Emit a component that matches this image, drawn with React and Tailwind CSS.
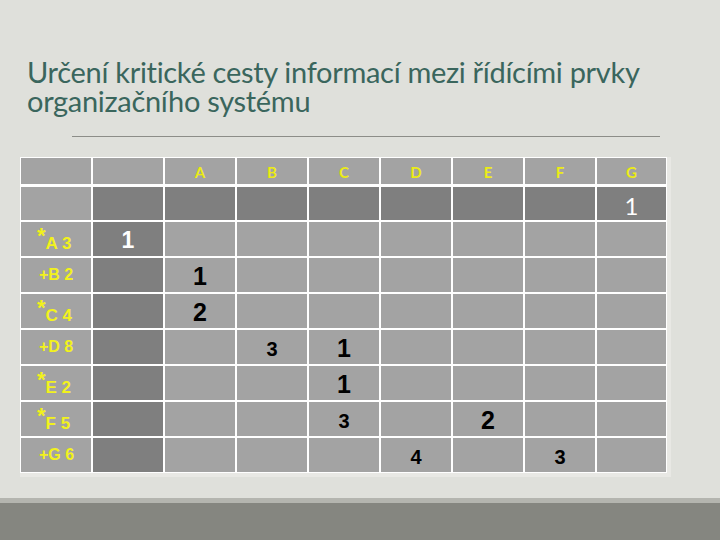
const COLS = ["", "", "A", "B", "C", "D", "E", "F", "G"];

// each row: label (with star or plus), then cells by column index
const ROWS = [
  { star: true, name: "A 3", cells: { 1: { v: "1", tone: "white" } } },
  { star: false, name: "+B 2", cells: { 2: { v: "1" } } },
  { star: true, name: "C 4", cells: { 2: { v: "2" } } },
  { star: false, name: "+D 8", cells: { 3: { v: "3", small: true }, 4: { v: "1" } } },
  { star: true, name: "E 2", cells: { 4: { v: "1" } } },
  { star: true, name: "F 5", cells: { 4: { v: "3", small: true }, 6: { v: "2" } } },
  { star: false, name: "+G 6", cells: { 5: { v: "4", small: true }, 7: { v: "3", small: true } } },
];

function Cell({ dark, className = "", children }) {
  return (
    <div className={`flex min-h-0 items-center justify-center overflow-hidden leading-none ${dark ? "bg-[#7f7f7f]" : "bg-[#a3a3a3]"} ${className}`}>
      {children}
    </div>
  );
}

function Label({ row }) {
  if (!row.star) {
    return (
      <Cell className="!justify-start pl-[18px]">
        <span className="font-['Liberation_Sans',sans-serif] text-[16px] font-bold text-[#f2f21c]">{row.name}</span>
      </Cell>
    );
  }
  return (
    <Cell className="!justify-start pl-[16px]">
      <span className="pt-[5px] font-['Liberation_Sans',sans-serif] font-bold text-[#f2f21c]">
        <span className="relative -top-[6px] text-[22px]">*</span>
        <span className="text-[17px]">{row.name}</span>
      </span>
    </Cell>
  );
}

function Value({ cell }) {
  if (!cell) return null;
  if (cell.tone === "white") {
    return <span className="pt-[2px] font-['Liberation_Sans',sans-serif] text-[23px] font-bold text-white">{cell.v}</span>;
  }
  return (
    <span className={`pt-[3px] font-['Liberation_Sans',sans-serif] font-bold text-black ${cell.small ? "text-[20px]" : "text-[25px]"}`}>
      {cell.v}
    </span>
  );
}

const GRID = "grid grid-cols-[70px_70px_70px_70px_70px_70px_70px_70px_69px] gap-x-[2px]";

export default function App() {
  return (
    <div className="flex h-[540px] w-[720px] flex-col overflow-hidden bg-[#dfe0db]">
      <div className="px-[27px] pt-[57px]">
        <h1 className="font-['Lato',sans-serif] text-[29px] font-normal leading-[29px] tracking-[-0.3px] text-[#3a665d]">
          Určení kritické cesty informací mezi řídícími prvky
          <br />
          organizačního systému
        </h1>
      </div>

      <div className="ml-[72px] mt-[21px] h-px w-[588px] bg-[#8c8d88]" />

      <div className="ml-[20px] mt-[20px] w-[647px] shadow-[2px_2px_0_2px_#e8e8e4]">
        <div className="flex flex-col gap-[2px] border border-white bg-white">
          <div className={`${GRID} mb-px h-[26px] grid-rows-[26px]`}>
            {COLS.map((c, i) => (
              <Cell key={i}>
                <span className="pt-[2px] font-['Lato',sans-serif] text-[15px] font-bold text-[#ecec14]">{c}</span>
              </Cell>
            ))}
          </div>
          <div className={`${GRID} h-[33px] grid-rows-[33px]`}>
            {COLS.map((c, i) => (
              <Cell key={i} dark={i > 0}>
                {i === 8 ? <span className="pt-[4px] font-['Lato',sans-serif] text-[24px] text-white">1</span> : null}
              </Cell>
            ))}
          </div>
          {ROWS.map((row, r) => (
            <div key={r} className={`${GRID} h-[34px] grid-rows-[34px]`}>
              <Label row={row} />
              {COLS.slice(1).map((c, i) => (
                <Cell key={i} dark={i === 0}>
                  <Value cell={row.cells[i + 1]} />
                </Cell>
              ))}
            </div>
          ))}
        </div>
      </div>

      <div className="mt-auto h-[5px] bg-[#b4b5af]" />
      <div className="h-[37px] bg-[#858680]" />
    </div>
  );
}
